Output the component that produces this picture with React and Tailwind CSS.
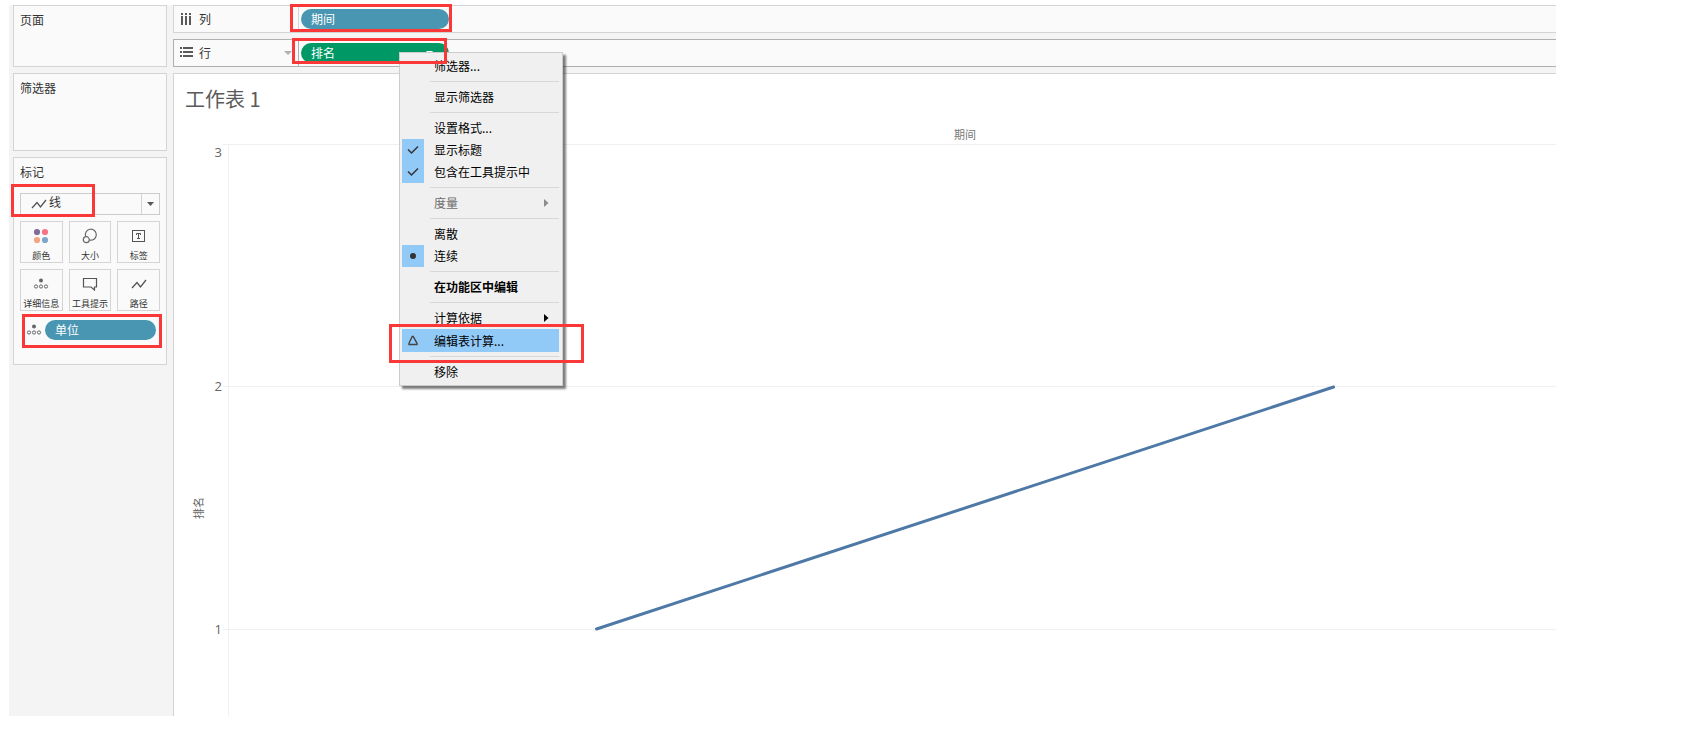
const MENU = [
  [{ label: "筛选器..." }],
  [{ label: "显示筛选器" }],
  [
    { label: "设置格式..." },
    { label: "显示标题", icon: "check" },
    { label: "包含在工具提示中", icon: "check" },
  ],
  [{ label: "度量", disabled: true, submenu: true }],
  [{ label: "离散" }, { label: "连续", icon: "dot" }],
  [{ label: "在功能区中编辑", bold: true }],
  [
    { label: "计算依据", submenu: true },
    { label: "编辑表计算...", icon: "delta", active: true },
  ],
  [{ label: "移除" }],
];

const MARKS = [
  { label: "颜色", icon: "color" },
  { label: "大小", icon: "size" },
  { label: "标签", icon: "label" },
  { label: "详细信息", icon: "detail" },
  { label: "工具提示", icon: "tooltip" },
  { label: "路径", icon: "path" },
];

function LineIcon() {
  return (
    <svg width="16" height="12" viewBox="0 0 16 12" fill="none" stroke="#555" strokeWidth="1.3">
      <path d="M1 10 6 4.500 9.500 9 15 2" />
    </svg>
  );
}

function DetailIcon() {
  return (
    <svg width="16" height="12" viewBox="0 0 16 12" fill="none" stroke="#666">
      <circle cx="8" cy="2.5" r="2" fill="#666" stroke="none" />
      <circle cx="3" cy="8.5" r="1.6" />
      <circle cx="8" cy="8.5" r="1.6" />
      <circle cx="13" cy="8.5" r="1.6" />
    </svg>
  );
}

function MarkIcon({ name }) {
  if (name === "path") return <LineIcon />;
  if (name === "detail") return <DetailIcon />;
  if (name === "color")
    return (
      <svg width="16" height="16" viewBox="0 0 16 16">
        <circle cx="4" cy="4" r="3.1" fill="#7f6d98" />
        <circle cx="12" cy="4" r="3.1" fill="#f87384" />
        <circle cx="4" cy="12" r="3.1" fill="#f3a67d" />
        <circle cx="12" cy="12" r="3.1" fill="#80a5cb" />
      </svg>
    );
  if (name === "size")
    return (
      <svg width="16" height="16" viewBox="0 0 16 16" fill="none" stroke="#666" strokeWidth="1.2">
        <path d="M3.6 8.4A5.5 5.5 0 1 1 7.4 12" />
        <circle cx="4.3" cy="11.7" r="3" />
      </svg>
    );
  if (name === "label")
    return (
      <svg width="14" height="12" viewBox="0 0 14 12" fill="none" stroke="#555">
        <rect x="0.5" y="0.5" width="12" height="11" />
        <path d="M4.5 5V3.5h4V5M6.5 3.5v5M5 8.5h3" />
      </svg>
    );
  return (
    <svg width="16" height="14" viewBox="0 0 16 14" fill="none" stroke="#555" strokeWidth="1.2">
      <path d="M1.5 1.5h13v8.500h-2v3L9 10H1.500z" />
    </svg>
  );
}

function MenuIcon({ name }) {
  if (name === "check")
    return (
      <svg width="12" height="10" viewBox="0 0 12 10" fill="none" stroke="#333" strokeWidth="1.5">
        <path d="M1 4.500 4.500 8 11 1.500" />
      </svg>
    );
  if (name === "dot") return <span className="size-1.5 rounded-full bg-[#333]" />;
  if (name === "delta")
    return (
      <svg width="10" height="11" viewBox="0 0 10 11" fill="none" stroke="#444" strokeWidth="1.4">
        <path d="M4.200 1.500h1L9 8.300v1.200H1V8.300z" />
      </svg>
    );
  return null;
}

function Highlight({ className }) {
  return <div className={`absolute z-20 border-3 border-[#fb3838] pointer-events-none ${className}`} />;
}

function Card({ title, className, children }) {
  return (
    <section className={`border border-[#d4d4d4] bg-[#fafafa] px-1.5 pt-1.5 ${className}`}>
      <h2 className="text-xs leading-4">{title}</h2>
      {children}
    </section>
  );
}

function Pill({ label, className, children }) {
  return (
    <button type="button" className={`h-5 rounded-full text-left text-xs leading-5 text-white pl-2.5 ${className}`}>
      {label}
      {children}
    </button>
  );
}

function Shelf({ title, icon, border, caret, children }) {
  return (
    <section className={`flex h-7 border border-r-0 bg-[#fafafa] ${border}`}>
      <div className={`flex w-[125px] shrink-0 items-center border-r pl-1.5 pr-1.5 ${border}`}>
        {icon}
        <h2 className="ml-1.5 flex-1 text-xs leading-4">{title}</h2>
        {caret && (
          <svg width="8" height="4" viewBox="0 0 8 4" fill="#b0b0b0">
            <path d="M0 0h8L4 4z" />
          </svg>
        )}
      </div>
      <div className="relative flex flex-1 items-center pl-0.5">{children}</div>
    </section>
  );
}

function ContextMenu() {
  return (
    <div
      role="menu"
      className="absolute left-[100px] top-3 z-10 w-[164px] border border-[#ccc] bg-[#f0f0f0] pl-0.5 pr-[3px] py-0.5 text-black shadow-[3px_3px_2px_rgba(0,0,0,0.5)]"
    >
      {MENU.map((group, i) => (
        <div key={i}>
          {i > 0 && <div className="ml-7 my-1 h-px bg-[#d7d7d7]" />}
          {group.map((item) => (
            <button
              key={item.label}
              type="button"
              role="menuitem"
              disabled={item.disabled}
              className={`relative flex w-full items-center text-left text-xs ${item.active ? "h-[23px] bg-[#91c9f7]" : "h-[22px]"} ${item.disabled ? "text-[#6d6d6d]" : ""} ${item.bold ? "font-bold" : ""}`}
            >
              <span className={`flex h-full w-[22px] items-center justify-center ${item.icon ? "bg-[#91c9f7]" : ""}`}>
                <MenuIcon name={item.icon} />
              </span>
              <span className="ml-2.5 flex-1 whitespace-nowrap">{item.label}</span>
              {item.submenu && (
                <svg className="mr-2.5" width="5" height="8" viewBox="0 0 5 8" fill={item.disabled ? "#8c8c8c" : "#000"}>
                  <path d="M0 0v8l4.500-4z" />
                </svg>
              )}
              {item.active && <Highlight className="-left-[13px] -right-[25px] -top-[5px] h-[39px]" />}
            </button>
          ))}
        </div>
      ))}
    </div>
  );
}

function Sidebar() {
  return (
    <aside className="flex w-[154px] shrink-0 flex-col gap-1.5">
      <Card title="页面" className="h-[62px]" />
      <Card title="筛选器" className="h-[78px]" />
      <Card title="标记" className="pb-6">
        <div className="relative mt-[13px] h-[22px] border border-[#ccc]">
          <select
            aria-label="标记类型"
            className="block h-full w-full appearance-none bg-transparent pb-1 pl-7 text-xs leading-4 outline-none"
          >
            <option>线</option>
          </select>
          <span className="pointer-events-none absolute inset-y-0 left-2.5 flex items-center">
            <LineIcon />
          </span>
          <span className="pointer-events-none absolute inset-y-0 right-0 flex w-[18px] items-center justify-center border-l border-[#d4d4d4]">
            <svg width="7" height="4" viewBox="0 0 7 4" fill="#555">
              <path d="M0 0h7L3.500 4z" />
            </svg>
          </span>
          <Highlight className="-left-2.5 -top-2.5 h-[33px] w-[84px]" />
        </div>
        <div className="mt-1.5 grid grid-cols-3 gap-1.5">
          {MARKS.map((m) => (
            <button
              key={m.label}
              type="button"
              className="flex h-[42px] flex-col items-center border border-[#d4d4d4] text-[9px] leading-3"
            >
              <span className="flex h-7 items-center">
                <MarkIcon name={m.icon} />
              </span>
              <span className="whitespace-nowrap">{m.label}</span>
            </button>
          ))}
        </div>
        <div className="relative mt-[9px] flex items-center pl-1.5 pr-1">
          <DetailIcon />
          <Pill label="单位" className="ml-[3px] flex-1 bg-[#4996b2]" />
          <Highlight className="-top-1.5 -right-0.5 left-0.5 h-[34px]" />
        </div>
      </Card>
    </aside>
  );
}

// The plot is larger than the view, so it runs off the right and bottom edges.
function Sheet() {
  return (
    <section className="flex min-h-0 flex-1 flex-col overflow-hidden border-l border-t border-[#d4d4d4] bg-white">
      <h1 className="mt-[11px] ml-[11px] text-xl leading-7 text-[#5a5a5a]">工作表 1</h1>
      <div className="mt-[13px] flex">
        <div className="w-[54px] shrink-0" />
        <div className="min-w-0 flex-1">
          <div className="w-[111%] text-center text-[11px] leading-4 text-[#777]">期间</div>
        </div>
      </div>
      <div className="mt-0.5 flex min-h-0 flex-1 overflow-hidden text-[#666]">
        <div className="flex h-[728px] w-[36px] shrink-0 items-center justify-center pl-3">
          <span className="-rotate-90 whitespace-nowrap text-[11px] leading-4">排名</span>
        </div>
        <svg className="h-[728px] w-[18px] shrink-0" fontSize="13" fill="#666" fontFamily="'Open Sans', sans-serif">
          <text x="12" y="13" textAnchor="end">3</text>
          <text x="12" y="247" textAnchor="end">2</text>
          <text x="12" y="490" textAnchor="end">1</text>
          <path d="M13 .5h5M13 242.500h5M13 485.500h5" stroke="#f0f0f0" />
        </svg>
        <div className="min-w-0 flex-1 overflow-hidden">
          <svg className="h-[728px] w-[111%]" stroke="#f0f0f0">
            <line x1="0.5" y1="0" x2="0.5" y2="728" />
            <line x1="0" y1="0.5" x2="100%" y2="0.5" />
            <line x1="0" y1="242.5" x2="100%" y2="242.5" />
            <line x1="0" y1="485.5" x2="100%" y2="485.5" />
            <line x1="25%" y1="485" x2="75%" y2="243" stroke="#4e79a7" strokeWidth="3" strokeLinecap="round" />
          </svg>
        </div>
      </div>
    </section>
  );
}

export default function App() {
  return (
    <div className="h-screen overflow-hidden bg-white pt-[5px] pr-[132px] pb-[21px] pl-[9px] font-['Noto_Sans_CJK_SC',sans-serif] text-[#333]">
      <div className="flex h-full gap-1.5 bg-[#f4f4f4] pl-1">
        <Sidebar />
        <main className="flex min-w-0 flex-1 flex-col gap-1.5">
          <Shelf
            title="列"
            border="border-[#d4d4d4]"
            icon={
              <svg width="13" height="13" viewBox="0 0 13 13" fill="#595959">
                <path d="M1 0h2v2H1zM5 0h2v2H5zM9 0h2v2H9zM1 3h2v9H1zM5 3h2v9H5zM9 3h2v9H9z" />
              </svg>
            }
          >
            <Pill label="期间" className="w-[148px] bg-[#4996b2]" />
            <Highlight className="-left-[9px] -top-0.5 h-7 w-[162px]" />
          </Shelf>
          <Shelf
            title="行"
            border="border-[#b0b0b0]"
            caret
            icon={
              <svg width="13" height="12" viewBox="0 0 13 12" fill="#595959">
                <path d="M0 0h2v2H0zM3 0h10v2H3zM0 4h2v2H0zM3 4h10v2H3zM0 8h2v2H0zM3 8h10v2H3z" />
              </svg>
            }
          >
            <Pill label="排名" className="flex w-[148px] items-center justify-between bg-[#009966] pr-4">
              <svg width="7" height="4" viewBox="0 0 7 4" fill="#fff">
                <path d="M0 0h7L3.500 4z" />
              </svg>
            </Pill>
            <ContextMenu />
            <Highlight className="-left-[7px] -top-0.5 h-[26px] w-[155px]" />
          </Shelf>
          <Sheet />
        </main>
      </div>
    </div>
  );
}
